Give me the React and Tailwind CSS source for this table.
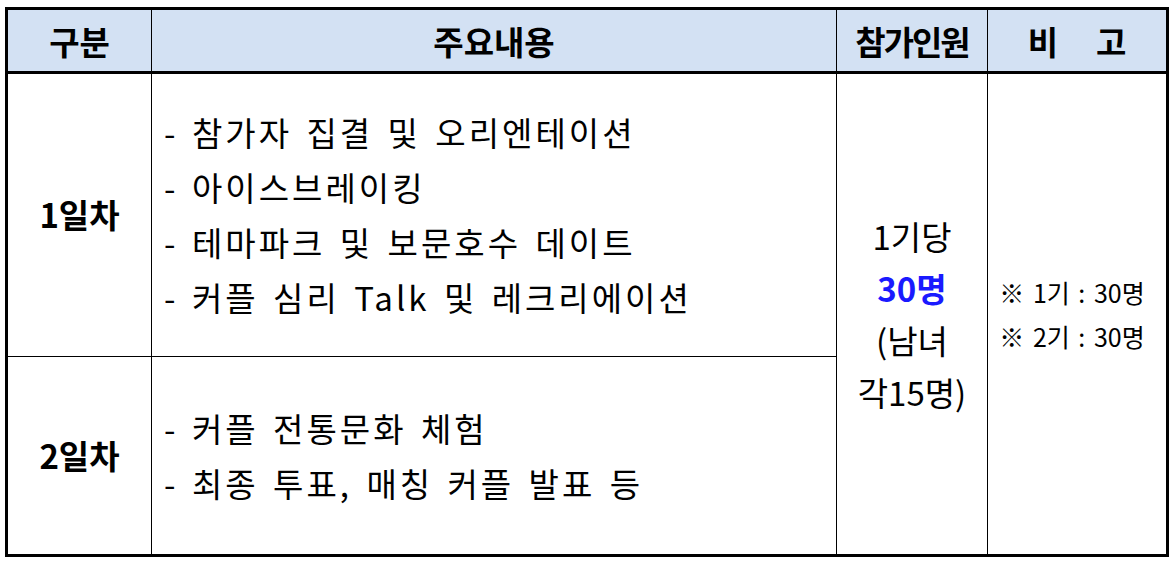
import React from "react";

const day1 = [
  "참가자 집결 및 오리엔테이션",
  "아이스브레이킹",
  "테마파크 및 보문호수 데이트",
  "커플 심리 Talk 및 레크리에이션",
];

const day2 = ["커플 전통문화 체험", "최종 투표, 매칭 커플 발표 등"];

const ItemList = ({ items }) => (
  <div className="flex flex-col pl-[12px] text-[33px] leading-[55px] tracking-[3px] [word-spacing:4px]">
    {items.map((t) => (
      <div key={t} className="flex">
        <span className="w-[28px] shrink-0">-</span>
        <span>{t}</span>
      </div>
    ))}
  </div>
);

const App = () => {
  return (
    <div
      className="min-h-screen bg-white pl-[5px] pt-[7px] text-black"
      style={{ fontFamily: '"Noto Sans CJK KR", "Noto Sans", sans-serif' }}
    >
      <table className="w-[1161px] table-fixed border-collapse border-[3px] border-black">
        <colgroup>
          <col className="w-[145px]" />
          <col className="w-[685px]" />
          <col className="w-[151px]" />
          <col className="w-[180px]" />
        </colgroup>
        <thead>
          <tr className="h-[64px] bg-[#d3e1f3] text-[33px] leading-[40px] font-bold">
            <th className="border border-black border-b-[3px] border-b-double">구분</th>
            <th className="border border-black border-b-[3px] border-b-double">주요내용</th>
            <th className="border border-black border-b-[3px] border-b-double tracking-[-2px]">참가인원</th>
            <th className="border border-black border-b-[3px] border-b-double">
              <span className="inline-flex gap-[38px]">
                <span>비</span>
                <span>고</span>
              </span>
            </th>
          </tr>
        </thead>
        <tbody>
          <tr className="h-[284px]">
            <td className="border border-black text-center text-[33px] font-bold">1일차</td>
            <td className="border border-black align-middle">
              <ItemList items={day1} />
            </td>
            <td rowSpan={2} className="border border-black text-center text-[33px] leading-[52px]">
              <div>1기당</div>
              <div className="font-bold text-[#1a1aff]">30명</div>
              <div>(남녀</div>
              <div>각15명)</div>
            </td>
            <td
              rowSpan={2}
              className="border border-black pr-[10px] text-center text-[25px] leading-[44px] [word-spacing:3px]"
            >
              <div>※ 1기 : 30명</div>
              <div>※ 2기 : 30명</div>
            </td>
          </tr>
          <tr className="h-[199px]">
            <td className="border border-black text-center text-[33px] font-bold">2일차</td>
            <td className="border border-black align-middle">
              <ItemList items={day2} />
            </td>
          </tr>
        </tbody>
      </table>
    </div>
  );
};

export default App;
